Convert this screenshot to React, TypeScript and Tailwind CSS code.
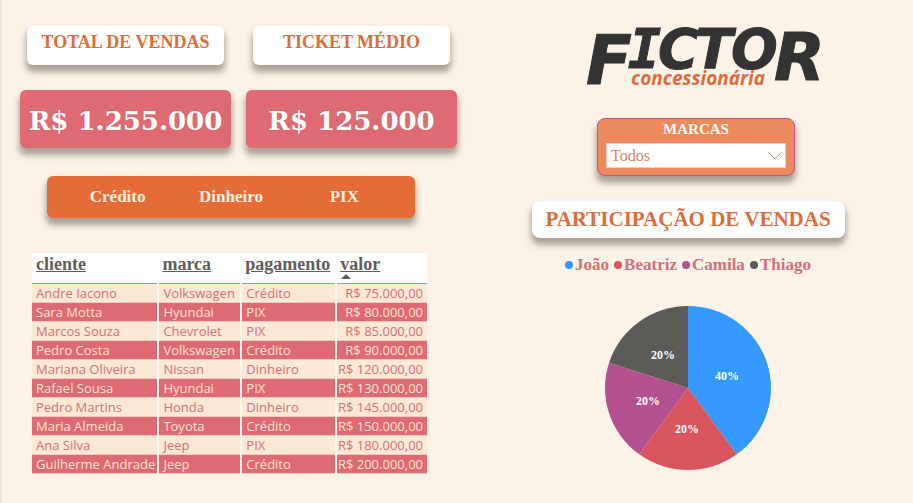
import React from "react";

const serif = "font-['Liberation_Serif',Georgia,serif]";
const raised = "shadow-[0_6px_6px_1px_rgba(90,80,70,0.5)]";

const payments = ["Crédito", "Dinheiro", "PIX"];

const sales = [
  ["Andre Iacono", "Volkswagen", "Crédito", "75.000,00"],
  ["Sara Motta", "Hyundai", "PIX", "80.000,00"],
  ["Marcos Souza", "Chevrolet", "PIX", "85.000,00"],
  ["Pedro Costa", "Volkswagen", "Crédito", "90.000,00"],
  ["Mariana Oliveira", "Nissan", "Dinheiro", "120.000,00"],
  ["Rafael Sousa", "Hyundai", "PIX", "130.000,00"],
  ["Pedro Martins", "Honda", "Dinheiro", "145.000,00"],
  ["Maria Almeida", "Toyota", "Crédito", "150.000,00"],
  ["Ana Silva", "Jeep", "PIX", "180.000,00"],
  ["Guilherme Andrade", "Jeep", "Crédito", "200.000,00"],
];

const sellers = [
  { name: "João", dot: "bg-[#3599ff]" },
  { name: "Beatriz", dot: "bg-[#d9555d]" },
  { name: "Camila", dot: "bg-[#b3508f]" },
  { name: "Thiago", dot: "bg-[#5d5b57]" },
];

function Metric({ title, value }: { title: string; value: string }) {
  return (
    <article>
      <h2
        className={`mx-[7px] h-[39px] rounded-md bg-white pt-[5px] text-center text-lg leading-[22px] font-bold whitespace-nowrap text-[#dc6e3c] ${raised}`}
      >
        {title}
      </h2>
      <p
        className={`mt-[25px] flex h-[58px] items-center justify-center rounded-md bg-[#de6a73] pt-1 font-['DejaVu_Serif',serif] text-[26px] font-bold whitespace-nowrap text-white ${raised}`}
      >
        {value}
      </p>
    </article>
  );
}

function Logo() {
  return (
    <svg
      role="img"
      aria-label="Fictor concessionária"
      viewBox="0 0 240 66"
      className="h-[66px] w-[240px] overflow-visible"
    >
      <g
        fill="#333333"
        stroke="#333333"
        strokeWidth="1"
        className="font-['DejaVu_Sans',sans-serif] font-bold italic"
      >
        <text x="1" y="60" fontSize="67">F</text>
        <text x="43" y="44" fontSize="55" className="font-['DejaVu_Sans_Mono',monospace]">I</text>
        <text x="73" y="44" fontSize="55">C</text>
        <text x="110" y="44" fontSize="55">T</text>
        <text x="146" y="44" fontSize="55">O</text>
        <text x="189" y="56" fontSize="66">R</text>
      </g>
      <text
        x="46"
        y="61"
        fontSize="19"
        fill="#dc6e3c"
        className="font-['Open_Sans',sans-serif] font-bold italic"
      >
        concessionária
      </text>
    </svg>
  );
}

function SalesTable() {
  const head = "h-[30px] p-0 pl-1 pt-px text-left align-top leading-5 text-lg font-bold text-[#605e5c]";
  const cell = "border-r-2 border-[#fdf6ee] border-b-[#efc9bd] p-0 pl-1";
  return (
    <table className="w-full table-fixed border-collapse">
      <colgroup>
        <col className="w-[32%]" />
        <col className="w-[21%]" />
        <col className="w-[24%]" />
        <col className="w-[23%]" />
      </colgroup>
      <thead>
        <tr className="border-b border-[#6fa8d6] bg-white">
          <th className={head}><span className="underline">cliente</span></th>
          <th className={head}><span className="underline">marca</span></th>
          <th className={head}><span className="underline">pagamento</span></th>
          <th className={head} aria-sort="ascending">
            <span className="block leading-5 underline">valor</span>
            <svg viewBox="0 0 10 5" className="ml-px h-[5px] w-[10px]" aria-hidden="true">
              <path d="M0 5 L5 0 L10 5 Z" fill="#605e5c" />
            </svg>
          </th>
        </tr>
      </thead>
      <tbody className="font-['Open_Sans',sans-serif] text-[13px] leading-[18px] whitespace-nowrap">
        {sales.map(([client, brand, payment, amount]) => (
          <tr
            key={client}
            className="border-b border-[#efc9bd] text-[#d4707a] odd:bg-[#fbe8d5] even:bg-[#de6a73] even:text-[#fce3d0]"
          >
            <td className={cell}>{client}</td>
            <td className={cell}>{brand}</td>
            <td className={cell}>{payment}</td>
            <td className="p-0 pr-1 text-right">R$ {amount}</td>
          </tr>
        ))}
      </tbody>
    </table>
  );
}

function Pie() {
  return (
    <svg
      role="img"
      aria-label="Participação de vendas por vendedor"
      viewBox="0 0 168 166"
      className="mt-[30px] h-[166px] w-[168px]"
    >
      <g transform="translate(84 83) scale(83 82)">
        <path d="M0 0 L0 -1 A1 1 0 0 1 0.5878 0.809 Z" fill="#3599ff" />
        <path d="M0 0 L0.5878 0.809 A1 1 0 0 1 -0.5878 0.809 Z" fill="#d9555d" />
        <path d="M0 0 L-0.5878 0.809 A1 1 0 0 1 -0.9511 -0.309 Z" fill="#b3508f" />
        <path d="M0 0 L-0.9511 -0.309 A1 1 0 0 1 0 -1 Z" fill="#5d5b57" />
      </g>
      <g fill="#ffffff" fontSize="12" textAnchor="middle" className="font-bold">
        <text x="123" y="75">40%</text>
        <text x="83" y="128">20%</text>
        <text x="44" y="100">20%</text>
        <text x="59" y="54">20%</text>
      </g>
    </svg>
  );
}

export default function App() {
  return (
    <main
      className={`grid min-h-screen grid-cols-[437fr_450fr] gap-[6px] border-l-2 border-[#e9e7e4] bg-[#fcf3e8] pl-[18px] ${serif}`}
    >
      <section className="pt-[26px]">
        <div className="grid grid-cols-2 gap-[15px]">
          <Metric title="TOTAL DE VENDAS" value="R$ 1.255.000" />
          <Metric title="TICKET MÉDIO" value="R$ 125.000" />
        </div>
        <div
          className={`mt-7 mr-[42px] ml-[27px] grid h-[42px] grid-cols-3 rounded-md bg-[#e66c37] px-[14px] ${raised}`}
        >
          {payments.map((p) => (
            <button key={p} type="button" className="text-[17px] font-bold text-[#fdf0e0]">
              {p}
            </button>
          ))}
        </div>
        <div className="mt-[35px] mr-[30px] ml-3">
          <SalesTable />
        </div>
      </section>

      <section className="flex flex-col items-center pt-6">
        <div className="ml-[34px]">
          <Logo />
        </div>
        <div
          className={`mt-7 ml-4 flex h-[58px] w-[198px] flex-col rounded-lg border border-[#b8558a] bg-[#ec8a5e] px-2 ${raised}`}
        >
          <label
            htmlFor="brands"
            className="h-[24px] text-center text-[15px] leading-[21px] font-bold text-[#fffaf0]"
          >
            MARCAS
          </label>
          <div className="relative">
            <select
              id="brands"
              className="block h-[25px] w-full appearance-none border border-[#f3cdb8] bg-white pl-1 text-base leading-[22px] text-[#dd8a62]"
            >
              <option>Todos</option>
            </select>
            <svg
              viewBox="0 0 14 8"
              className="pointer-events-none absolute top-[9px] right-1 h-2 w-[14px]"
              fill="none"
              stroke="#dd8a62"
              aria-hidden="true"
            >
              <path d="M0.5 0.5 L7 7 L13.5 0.5" />
            </svg>
          </div>
        </div>
        <h2
          className={`mt-[25px] h-[37px] w-[313px] rounded-lg bg-white text-center text-[21px] leading-[37px] font-bold whitespace-nowrap text-[#dc6e3c] ${raised}`}
        >
          PARTICIPAÇÃO DE VENDAS
        </h2>
        <ul className="mt-[17px] flex gap-[5px] text-[17px] leading-5 font-bold text-[#d4707a]">
          {sellers.map((s) => (
            <li key={s.name} className="flex items-center gap-[2px]">
              <span className={`size-2 rounded-full ${s.dot}`} />
              {s.name}
            </li>
          ))}
        </ul>
        <Pie />
      </section>
    </main>
  );
}
